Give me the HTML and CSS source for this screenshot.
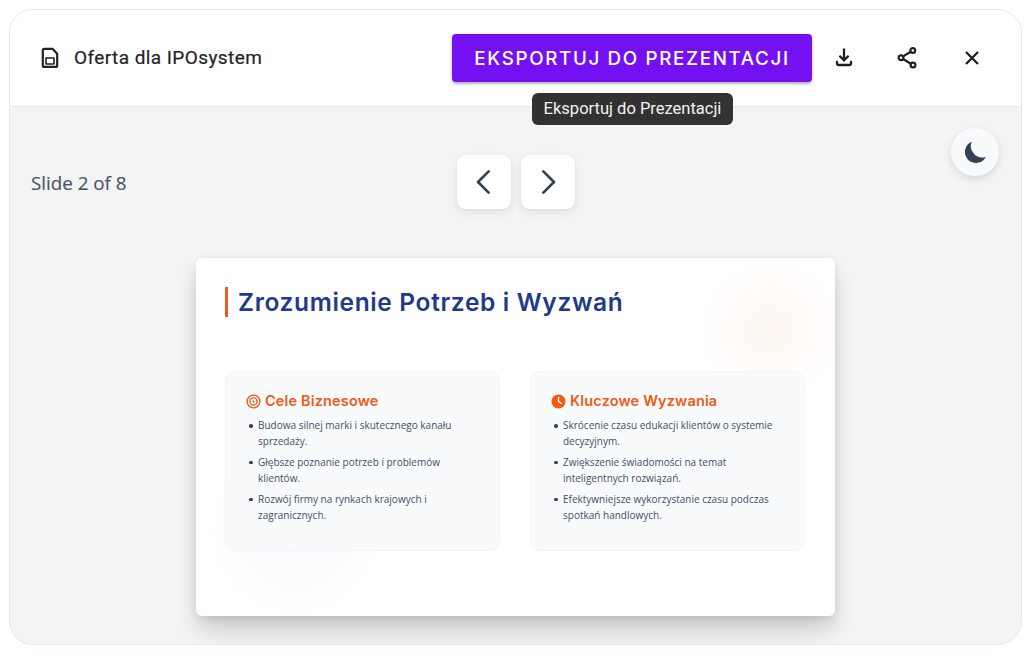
FILE: index.html
```html
<!DOCTYPE html>
<html lang="pl">
<head>
<meta charset="utf-8">
<title>Oferta dla IPOsystem</title>
<link rel="stylesheet" href="styles.css">
</head>
<body>
<div class="window">
  <header class="header">
    <div class="doc">
      <svg class="doc-icon" viewBox="0 0 24 24" width="24" height="24" fill="none" stroke="#1f2328" stroke-width="2.2" stroke-linejoin="round"><path d="M6 2.8h8.4l4.8 5V19.4a1.5 1.5 0 0 1-1.5 1.5H6.3a1.5 1.5 0 0 1-1.5-1.5V4.3A1.5 1.5 0 0 1 6.3 2.8z"/><rect x="8" y="12" width="8" height="6" stroke-width="1.6"/></svg>
      <span class="doc-title">Oferta dla IPOsystem</span>
    </div>
    <div class="actions">
      <button class="export">EKSPORTUJ DO PREZENTACJI</button>
      <button class="icon-btn" aria-label="Pobierz"><svg viewBox="0 0 24 24" width="24" height="24" fill="none" stroke="#1f1f1f" stroke-width="2.3"><path d="M12 2.5v11.5M7.4 9.8 12 14.3l4.6-4.5"/><path d="M5 16v1.2a1.8 1.8 0 0 0 1.8 1.8h10.4a1.8 1.8 0 0 0 1.8-1.8V16" stroke-linecap="round"/></svg></button>
      <button class="icon-btn" aria-label="Udostępnij"><svg viewBox="0 0 24 24" width="24" height="24" fill="none" stroke="#1f1f1f" stroke-width="2.2"><circle cx="17.8" cy="4.5" r="2.4"/><circle cx="6" cy="11.7" r="2.4"/><circle cx="18" cy="19" r="2.4"/><path d="M8.1 10.4l7.6-4.6M8.1 13l7.8 4.7"/></svg></button>
      <button class="icon-btn" aria-label="Zamknij"><svg viewBox="0 0 24 24" width="24" height="24" fill="none" stroke="#1f1f1f" stroke-width="2.3"><path d="M6 6l12 12M18 6 6 18"/></svg></button>
    </div>
    <div class="tooltip">Eksportuj do Prezentacji</div>
  </header>
  <main class="stage">
    <button class="theme" aria-label="Tryb ciemny"><svg viewBox="0 0 24 24" width="26" height="26"><path fill="#334155" d="M9 2.5A10.2 10.2 0 1 0 22 16.5 10.5 10.5 0 0 1 9 2.5z"/></svg></button>
    <div class="toolbar">
      <span class="counter">Slide 2 of 8</span>
      <div class="nav">
        <button class="nav-btn" aria-label="Poprzedni"><svg viewBox="0 0 24 24" width="32" height="32" fill="none" stroke="#334155" stroke-width="2" stroke-linecap="round" stroke-linejoin="round"><path d="M15.5 4 7.5 12l8 8"/></svg></button>
        <button class="nav-btn" aria-label="Następny"><svg viewBox="0 0 24 24" width="32" height="32" fill="none" stroke="#334155" stroke-width="2" stroke-linecap="round" stroke-linejoin="round"><path d="M8.5 4l8 8-8 8"/></svg></button>
      </div>
    </div>
    <section class="slide">
      <div class="glow glow-orange"></div>
      <div class="glow glow-blue"></div>
      <h1 class="slide-title">Zrozumienie Potrzeb i Wyzwań</h1>
      <div class="cards">
        <article class="card">
          <h2 class="card-title">
            <svg viewBox="0 0 16 16" width="15" height="15" fill="none" stroke="#f05a14"><circle cx="8" cy="8" r="6.8" stroke-width="1.5"/><circle cx="8" cy="8" r="3.8" stroke-width="1.4"/><circle cx="8" cy="8" r="1.2" fill="#f05a14" stroke="none"/></svg>
            Cele Biznesowe
          </h2>
          <ul class="list">
            <li>Budowa silnej marki i skutecznego kanału sprzedaży.</li>
            <li>Głębsze poznanie potrzeb i problemów klientów.</li>
            <li>Rozwój firmy na rynkach krajowych i zagranicznych.</li>
          </ul>
        </article>
        <article class="card">
          <h2 class="card-title">
            <svg viewBox="0 0 16 16" width="15" height="15"><circle cx="8" cy="8" r="7.5" fill="#f05a14"/><path d="M8 3.6V8l3 2" fill="none" stroke="#fff" stroke-width="1.4" stroke-linecap="round"/></svg>
            Kluczowe Wyzwania
          </h2>
          <ul class="list">
            <li>Skrócenie czasu edukacji klientów o systemie decyzyjnym.</li>
            <li>Zwiększenie świadomości na temat inteligentnych rozwiązań.</li>
            <li>Efektywniejsze wykorzystanie czasu podczas spotkań handlowych.</li>
          </ul>
        </article>
      </div>
    </section>
  </main>
</div>
</body>
</html>
```
FILE: styles.css
```css
* { box-sizing: border-box; }
html, body { margin: 0; height: 100%; background: #fff; overflow: hidden; }
body { padding: 9px 2px 12px 9px; }
button { border: 0; padding: 0; cursor: pointer; font: inherit; }
svg { display: block; flex: none; }

.window {
  height: 636px;
  border: 1px solid #e5e7eb;
  border-radius: 24px;
  overflow: hidden;
  display: flex;
  flex-direction: column;
  background: #f3f4f6;
}

.header {
  position: relative;
  flex: none;
  height: 97px;
  background: #fff;
  border-bottom: 1px solid #e5e7eb;
  display: flex;
  align-items: center;
  justify-content: space-between;
  padding: 0 25px 0 28px;
}
.doc { display: flex; align-items: center; gap: 12px; margin-top: -1px; }
.doc-title { font: 400 19px "Roboto", sans-serif; letter-spacing: .42px; color: #1f2328; -webkit-text-stroke: .2px #1f2328; }
.actions { display: flex; align-items: center; }
.export {
  width: 360px;
  height: 48px;
  background: #7311f2;
  color: #fff;
  border-radius: 4px;
  font: 500 18.8px "Inter", sans-serif;
  letter-spacing: 1.65px;
  box-shadow: 0 2px 2px rgba(0,0,0,.22), 0 1px 4px rgba(0,0,0,.14);
  margin-right: 8px;
}
.icon-btn {
  width: 48px;
  height: 48px;
  background: transparent;
  display: flex;
  align-items: center;
  justify-content: center;
}
.icon-btn + .icon-btn { margin-left: 15px; }
.icon-btn:last-child { margin-left: 17px; }
.tooltip {
  position: absolute;
  left: 522px;
  top: 83px;
  height: 32px;
  width: 201px;
  background: #323232;
  color: #f2f2f2;
  border-radius: 6px;
  font: 400 16.5px/32px "Roboto", sans-serif;
  text-align: center;
  z-index: 3;
}

.stage {
  position: relative;
  flex: 1;
  display: flex;
  flex-direction: column;
  padding: 48px 21px 0;
}
.toolbar { display: flex; align-items: center; height: 54px; }
.counter { font: 400 18.8px "Open Sans", sans-serif; color: #4b5563; width: 425.5px; padding-top: 1px; -webkit-text-stroke: .15px #4b5563; }
.nav { display: flex; gap: 10px; }
.nav-btn {
  width: 54px;
  height: 54px;
  background: #fff;
  border-radius: 9px;
  display: flex;
  align-items: center;
  justify-content: center;
  box-shadow: 0 3px 8px rgba(0,0,0,.1);
}
.theme {
  position: absolute;
  left: 941px;
  top: 21px;
  width: 48px;
  height: 48px;
  border-radius: 50%;
  background: #f8fafc;
  display: flex;
  align-items: center;
  justify-content: center;
  box-shadow: 0 3px 8px rgba(0,0,0,.12);
}

.slide {
  position: relative;
  align-self: flex-start;
  width: 639px;
  height: 358px;
  margin: 49px 0 0 165px;
  padding: 29px 29px 0;
  background: #fff;
  border-radius: 6px;
  overflow: hidden;
  box-shadow: 0 15px 25px -3px rgba(0,0,0,.2), 0 2px 10px rgba(0,0,0,.08);
}
.glow { position: absolute; border-radius: 50%; }
.glow-orange {
  right: -8px;
  top: 0;
  width: 146px;
  height: 146px;
  background: radial-gradient(closest-side, rgba(249,115,22,.06) 0%, rgba(249,115,22,.035) 45%, rgba(249,115,22,0) 100%);
}
.glow-blue {
  left: 9px;
  bottom: -4px;
  width: 180px;
  height: 180px;
  background: radial-gradient(closest-side, rgba(30,58,138,.028) 0%, rgba(30,58,138,.016) 55%, rgba(30,58,138,0) 100%);
}
.slide-title {
  position: relative;
  margin: 0;
  height: 30px;
  padding-left: 10px;
  border-left: 3px solid #f05a14;
  font: 600 24.5px/30px "Inter", sans-serif;
  letter-spacing: .65px;
  color: #1e3a8a;
}
.cards {
  position: relative;
  display: grid;
  grid-template-columns: 275px 275px;
  gap: 30px;
  margin-top: 54px;
}
.card {
  height: 180px;
  padding: 20px 20px 0;
  background: #f8fafc;
  border: 1px solid #f1f5f9;
  border-radius: 10px;
}
.card-title {
  display: flex;
  align-items: center;
  gap: 4px;
  margin: 0 0 8px;
  height: 18px;
  font: 600 14.5px/18px "Inter", sans-serif;
  letter-spacing: .15px;
  color: #f05a14;
}
.list {
  margin: 0;
  padding: 0 0 0 12px;
  list-style: none;
  font: 400 10px/15.7px "Open Sans", sans-serif;
  color: #434f63;
}
.list li { position: relative; margin-bottom: 5.5px; }
.list li::before {
  content: "";
  position: absolute;
  left: -9px;
  top: 6px;
  width: 3.5px;
  height: 3.5px;
  border-radius: 50%;
  background: #334155;
}
```
